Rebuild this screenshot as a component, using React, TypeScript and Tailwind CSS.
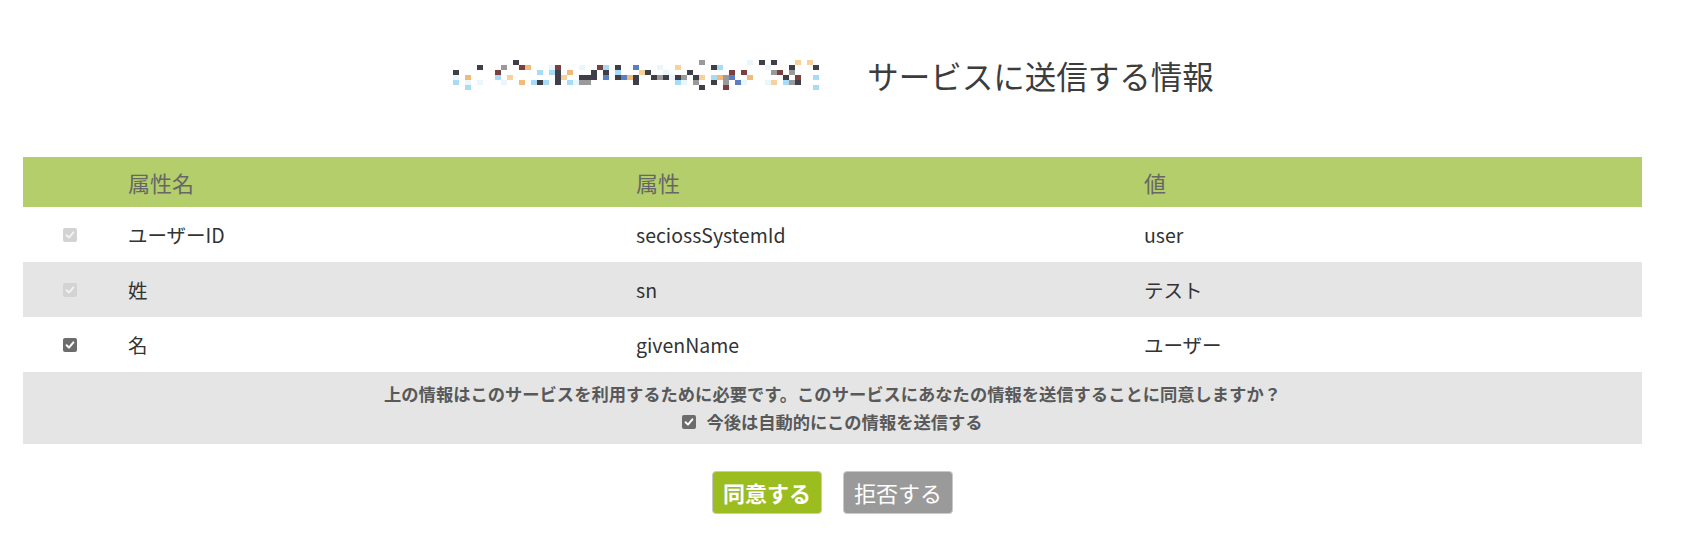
import React from 'react';

const jp = '"Noto Sans CJK JP", "Noto Sans", sans-serif';

const rows = [
  { label: 'ユーザーID', attr: 'seciossSystemId', value: 'user', locked: true },
  { label: '姓', attr: 'sn', value: 'テスト', locked: true },
  { label: '名', attr: 'givenName', value: 'ユーザー', locked: false },
];

// blurred logo, drawn as a mosaic of blocks
const palette = ['#3f3f4a', '#3f3f4a', '#5a7ec2', '#a6dcf7', '#f6d29a', '#7a4040', '#9a9a9a', '#e9f7fd', '#f2b978', '#3f3f4a'];

function Logo() {
  const cols = 61;
  const rowsN = 6;
  const cells: React.ReactNode[] = [];
  let seed = 11;
  const rnd = () => {
    seed = (seed * 9301 + 49297) % 233280;
    return seed / 233280;
  };
  for (let c = 0; c < cols; c++) {
    for (let r = 0; r < rowsN; r++) {
      const p = rnd();
      const bias = r === 3 || r === 4 ? 0.45 : r === 2 ? 0.3 : r === 1 ? 0.18 : 0.1;
      if (p < bias) {
        const col = palette[Math.floor(rnd() * palette.length)];
        cells.push(<rect key={`${c}-${r}`} x={c * 6} y={r * 5} width={6} height={5} fill={col} />);
      }
    }
  }
  return (
    <svg width="366" height="30" viewBox="0 0 366 30" className="shrink-0">
      {cells}
    </svg>
  );
}

function Box({ on, disabled }: { on: boolean; disabled?: boolean }) {
  return (
    <span
      className={`inline-flex h-[14px] w-[14px] shrink-0 items-center justify-center rounded-[2px] ${
        disabled ? 'bg-[#d3d3d3]' : 'bg-[#6c6c6c]'
      }`}
    >
      {on && (
        <svg width="10" height="10" viewBox="0 0 10 10">
          <path
            d="M1.6 5.2 L4 7.6 L8.4 2.4"
            fill="none"
            stroke={disabled ? '#f2f2f2' : '#ffffff'}
            strokeWidth="2"
            strokeLinecap="round"
            strokeLinejoin="round"
          />
        </svg>
      )}
    </span>
  );
}

export default function App() {
  return (
    <div className="min-h-[551px] w-full bg-white text-[#333]" style={{ fontFamily: jp }}>
      <div className="flex h-[157px] items-start justify-center pt-[52px] pr-[14px]">
        <div className="flex h-[46px] items-center gap-[48px]">
          <Logo />
          <h1 className="text-[31.5px] font-normal leading-[46px] text-[#3c3c3c]">サービスに送信する情報</h1>
        </div>
      </div>

      <div className="ml-[23px] w-[1619px]">
        <div className="grid h-[50px] grid-cols-[105px_508px_508px_1fr] items-center bg-[#b3ce6a] text-[22px] text-[#676767]">
          <div />
          <div>属性名</div>
          <div>属性</div>
          <div>値</div>
        </div>
        {rows.map((r, i) => (
          <div
            key={r.attr}
            className={`grid h-[55px] grid-cols-[105px_508px_508px_1fr] items-center text-[19.5px] ${
              i % 2 === 1 ? 'bg-[#e5e5e5]' : 'bg-white'
            }`}
          >
            <div className="pl-[40px] flex items-center">
              <Box on disabled={r.locked} />
            </div>
            <div>{r.label}</div>
            <div>{r.attr}</div>
            <div>{r.value}</div>
          </div>
        ))}
        <div className="flex flex-col items-center bg-[#e5e5e5] py-[8px] text-[17.3px] font-bold leading-[28px] text-[#595959]">
          <div>上の情報はこのサービスを利用するために必要です。このサービスにあなたの情報を送信することに同意しますか？</div>
          <label className="flex items-center gap-[10px]">
            <Box on />
            <span>今後は自動的にこの情報を送信する</span>
          </label>
        </div>

        <div className="mt-[27px] flex justify-center gap-[21px]">
          <button className="h-[43px] w-[110px] rounded-[4px] border border-[#c9c9c9] bg-[#9cbd1f] text-[22px] font-bold text-white">
            同意する
          </button>
          <button className="h-[43px] w-[110px] rounded-[4px] border border-[#c9c9c9] bg-[#9a9a9a] text-[22px] text-white">
            拒否する
          </button>
        </div>
      </div>
    </div>
  );
}
